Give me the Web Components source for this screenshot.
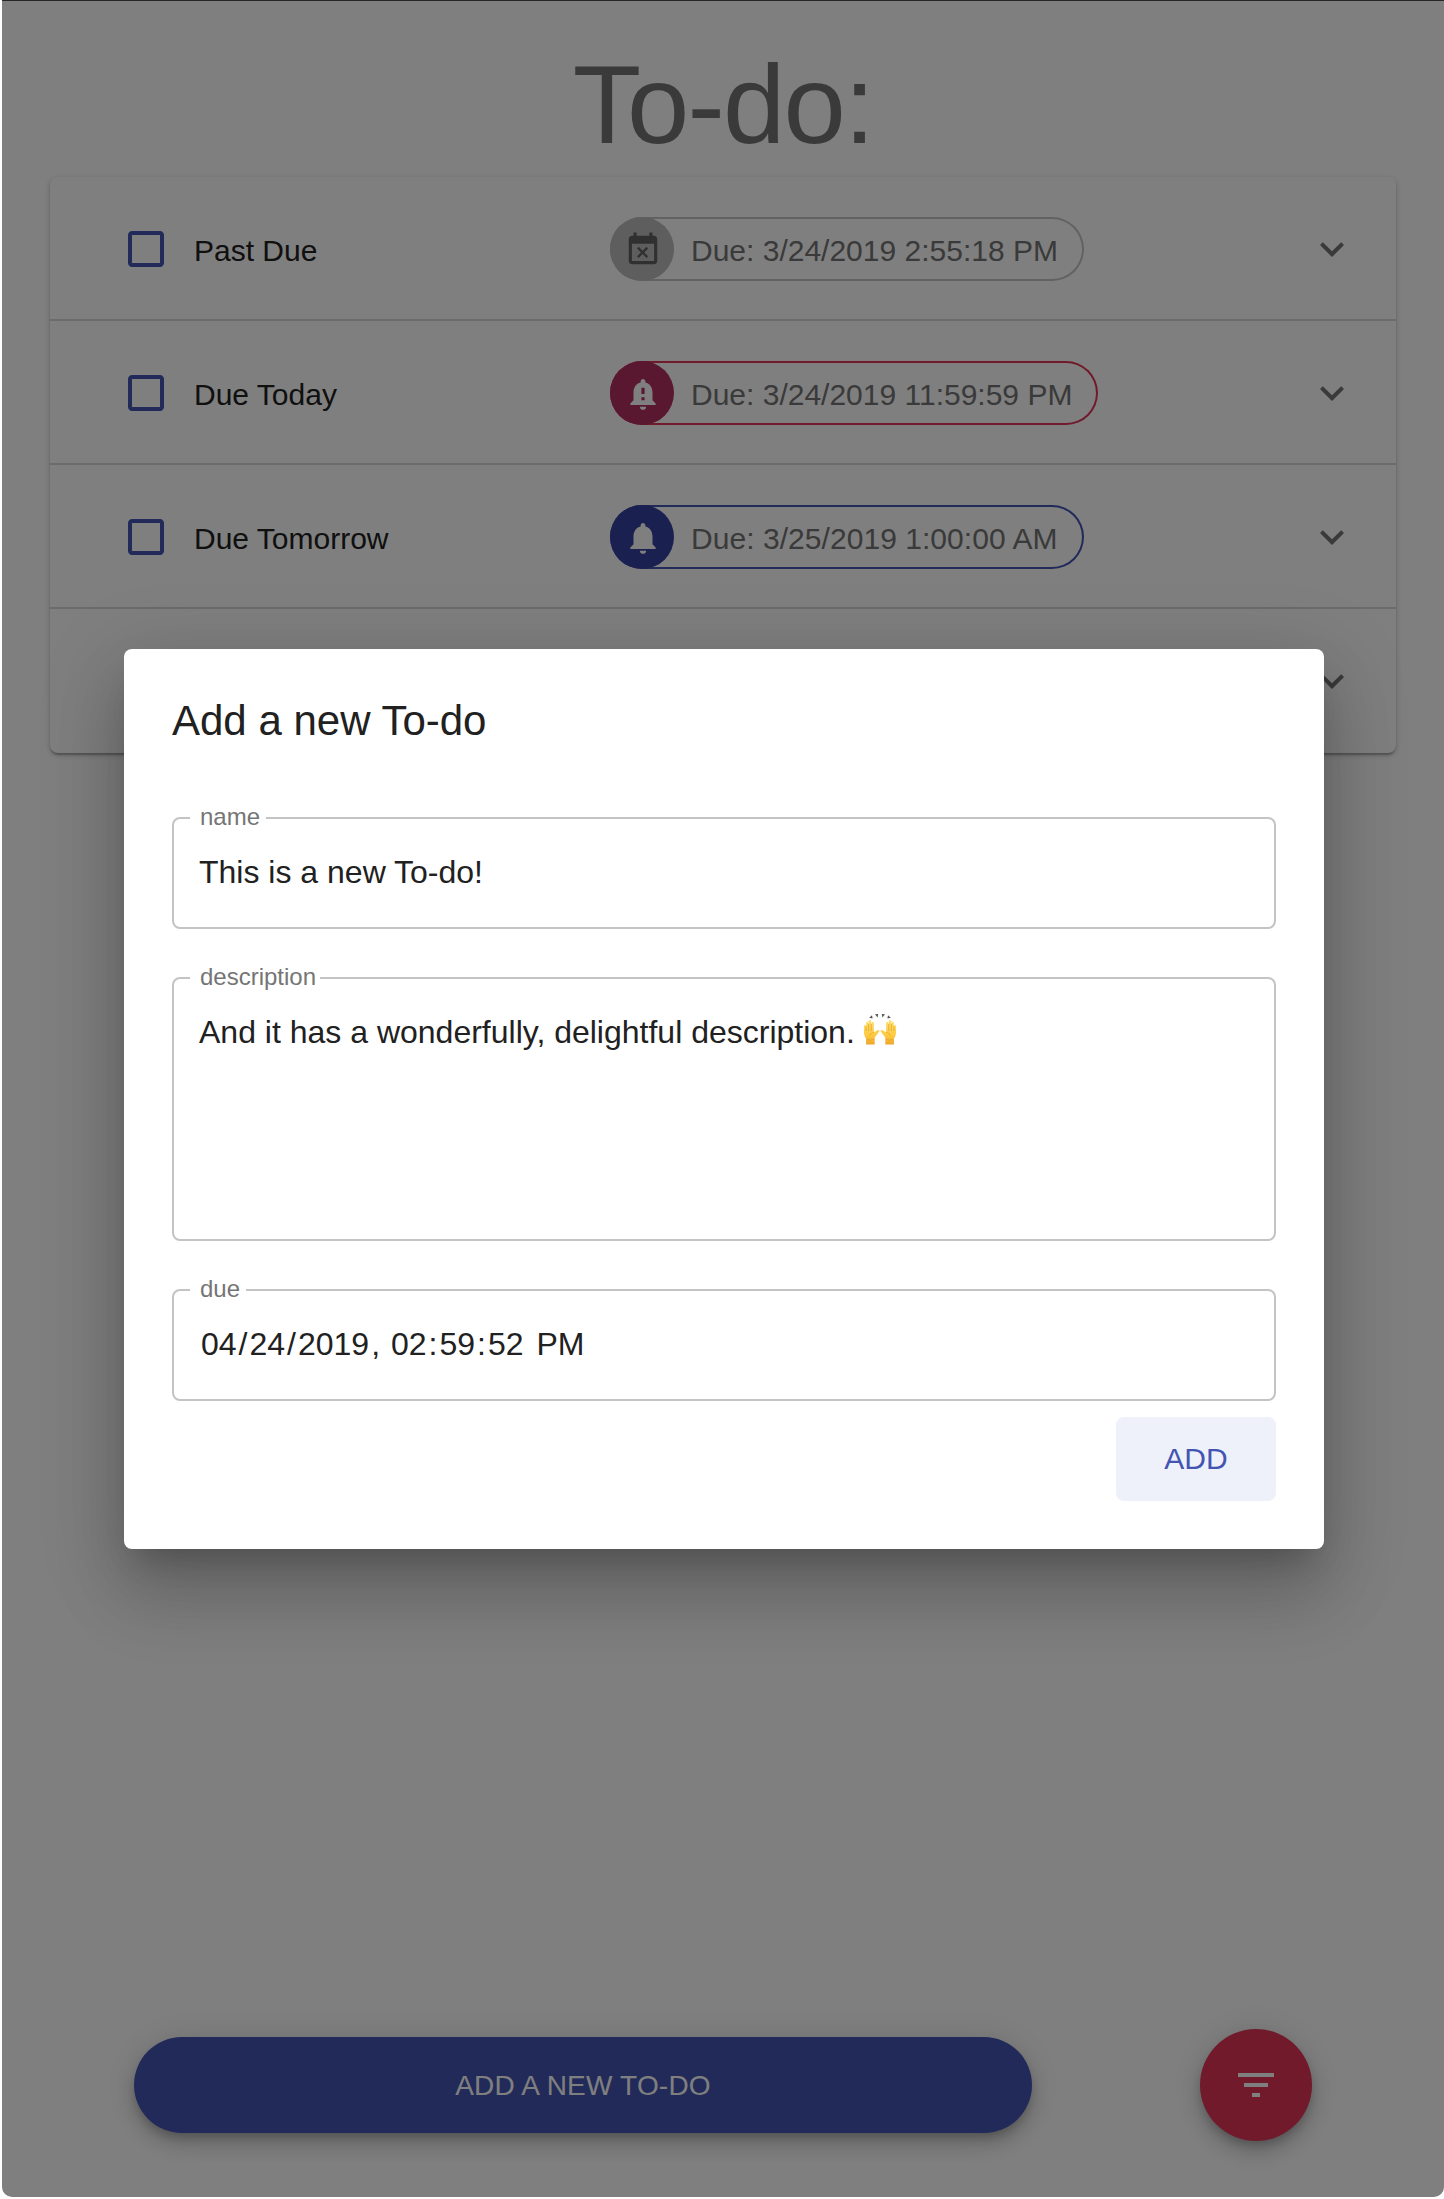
<!DOCTYPE html>
<html lang="en">
<head>
<meta charset="utf-8">
<title>To-do</title>
<style>
  html, body { margin: 0; background: #fff; }
  body { font-family: "Liberation Sans", Arial, sans-serif; width: 1444px; height: 2199px; overflow: hidden; }
</style>
</head>
<body>
<todo-app>
  <todo-item name="Past Due" due="3/24/2019 2:55:18 PM" tone="past"></todo-item>
  <todo-item name="Due Today" due="3/24/2019 11:59:59 PM" tone="today"></todo-item>
  <todo-item name="Due Tomorrow" due="3/25/2019 1:00:00 AM" tone="soon"></todo-item>
  <todo-item></todo-item>
  <todo-dialog slot="dialog"></todo-dialog>
</todo-app>
<script>
const ICONS = {
  box: 'M19 5v14H5V5h14m0-2H5c-1.1 0-2 .9-2 2v14c0 1.1.9 2 2 2h14c1.1 0 2-.9 2-2V5c0-1.1-.9-2-2-2z',
  more: 'M16.59 8.59L12 13.17 7.41 8.59 6 10l6 6 6-6z',
  filter: 'M10 18h4v-2h-4v2zM3 6v2h18V6H3zm3 7h12v-2H6v2z',
  past: 'M9.31 17l2.44-2.44L14.19 17l1.06-1.06-2.44-2.44 2.44-2.44L14.19 10l-2.44 2.44L9.31 10l-1.06 1.06 2.44 2.44-2.44 2.44L9.31 17zM19 3h-1V1h-2v2H8V1H6v2H5c-1.11 0-1.99.9-1.99 2L3 19c0 1.1.89 2 2 2h14c1.1 0 2-.9 2-2V5c0-1.1-.9-2-2-2zm0 16H5V8h14v11z',
  today: 'M18 16v-5c0-3.07-1.64-5.64-4.5-6.32V4c0-.83-.67-1.5-1.5-1.5s-1.5.67-1.5 1.5v.68C7.63 5.36 6 7.92 6 11v5l-2 2v1h16v-1l-2-2zm-5 0h-2v-2h2v2zm0-4h-2V8h2v4zm-1 10c1.1 0 2-.9 2-2h-4c0 1.1.89 2 2 2z',
  soon: 'M12 22c1.1 0 2-.9 2-2h-4c0 1.1.89 2 2 2zm6-6v-5c0-3.07-1.64-5.64-4.5-6.32V4c0-.83-.67-1.5-1.5-1.5s-1.5.67-1.5 1.5v.68C7.63 5.36 6 7.92 6 11v5l-2 2v1h16v-1l-2-2z'
};

class Base extends HTMLElement {
  connectedCallback() {
    if (this.shadowRoot) return;
    this.attachShadow({ mode: 'open' }).innerHTML = this.view();
  }
}

customElements.define('md-icon', class extends Base {
  view() {
    return `<style>:host{display:block;flex:none;width:48px;height:48px}svg{display:block;width:100%;height:100%;fill:currentColor}</style>
    <svg viewBox="0 0 24 24"><path d="${ICONS[this.getAttribute('name')]}"/></svg>`;
  }
});

customElements.define('due-chip', class extends Base {
  view() {
    return `<style>
      :host{display:flex;box-sizing:border-box;width:474px;height:64px;border-radius:32px;box-shadow:inset 0 0 0 2px var(--line);color:#757575;--line:#c4c4c4;--disc:#bdbdbd;--glyph:#616161}
      :host([tone=today]){width:488px;--line:#e23458;--disc:#b42e60;--glyph:#fff}
      :host([tone=soon]){--line:#4354b2;--disc:#3440a0;--glyph:#fff}
      .disc{display:flex;justify-content:center;align-items:center;width:64px;height:64px;border-radius:50%;background:var(--disc);color:var(--glyph);flex:none;padding:1.5px 0 0 2px;box-sizing:border-box}
      md-icon{width:38px;height:38px}
      .t{padding:4px 0 0 17px;line-height:60px;font-size:30px;white-space:nowrap}
      :host([tone=soon]) .t{letter-spacing:.05px}
    </style><div class="disc"><md-icon name="${this.getAttribute('tone')}"></md-icon></div><div class="t"><slot></slot></div>`;
  }
});

customElements.define('todo-item', class extends Base {
  view() {
    const n = this.getAttribute('name');
    const tone = this.getAttribute('tone');
    return `<style>
      :host{display:grid;grid-template-columns:488px 1fr 48px;align-items:center;box-sizing:border-box;height:144px;padding:0 40px 0 72px;color:#212121;position:relative}
      :host(:not(:last-of-type)){box-shadow:inset 0 -2px #d6d6d6}
      .name{display:flex;align-items:center;gap:24px}
      .name span{font-size:30px;line-height:44px;padding-top:4px}
      md-icon[name=box]{color:#4354b2}
      md-icon[name=more]{color:#757575;grid-column:3}
    </style>
    ${n ? `<div class="name"><md-icon name="box"></md-icon><span>${n}</span></div>
    <due-chip tone="${tone}">Due: ${this.getAttribute('due')}</due-chip>` : ''}
    <md-icon name="more"></md-icon>`;
  }
});

customElements.define('outlined-field', class extends Base {
  view() {
    return `<style>
      :host{display:block;margin-top:38px}
      fieldset{box-sizing:border-box;margin:0;padding:0;border:2px solid #c4c4c4;border-radius:8px;height:var(--h,122px);min-width:0}
      legend{box-sizing:border-box;margin-left:16px;width:${this.getAttribute('notch')}px;padding:0 0 2px 10px;font-size:24px;line-height:20px;color:#757575;white-space:nowrap}
      .v{padding:24px 0 0 25px;font-size:32px;line-height:38px;color:#212121;white-space:nowrap}
    </style><fieldset><legend>${this.getAttribute('label')}</legend><div class="v"><slot></slot></div></fieldset>`;
  }
});

customElements.define('raised-hands', class extends Base {
  view() {
    return `<style>:host{display:inline-block;width:34px;height:32px;vertical-align:-2px;margin-left:-1px}svg{display:block}</style>
    <svg width="34" height="32" viewBox="0 0 34 32" role="img" aria-label="raised hands">
      <defs><linearGradient id="g" x1="0" y1="0" x2="0" y2="1"><stop offset="0" stop-color="#ffe070"/><stop offset=".65" stop-color="#fcc93f"/><stop offset="1" stop-color="#eea62c"/></linearGradient>
      <g id="h"><path fill="url(#g)" d="M3 31.400V25.600C1.600 23.500.7 20.500.9 17.200L1.200 12.500Q1.800 11.200 2.800 12.200L3 13.500 3.300 9.200Q4.200 7.800 5.300 9L5.500 11 5.900 7.700Q6.900 6.500 8 7.700L8.300 11 8.900 9.300Q10 8.200 10.900 9.600L10.900 18.300Q11.100 19.600 12.300 18.600 14.500 16.600 16.200 17.200 16.900 17.900 15.700 19.200L11.700 24.500V31.400Z"/>
      <path fill="none" stroke="#e3a02e" stroke-width=".7" d="M3.100 13.500V18M5.600 11V18M8.300 11V18M6.500 22.500Q8.500 19.500 10.500 19.500M4.200 26.500Q7.500 28 11.300 26"/></g></defs>
      <use href="#h"/><use href="#h" transform="matrix(-1 0 0 1 34 0)"/>
      <path fill="#555" d="M6.200 4.800L9 2.200 9.600 5.400ZM12 1.300L15.200.9 14.600 4.500ZM22 1.300L18.800.9 19.400 4.500ZM27.800 4.800L25 2.200 24.400 5.400Z"/>
    </svg>`;
  }
});

customElements.define('todo-dialog', class extends Base {
  view() {
    return `<style>
      :host{display:block;box-sizing:border-box;width:1200px;height:900px;padding:0 48px;background:#fff;border-radius:8px;box-shadow:0 22px 30px -14px rgba(0,0,0,.2),0 48px 70px 4px rgba(0,0,0,.14),0 18px 80px 14px rgba(0,0,0,.12)}
      h2{box-sizing:border-box;height:158px;margin:0;padding-top:44px;font-size:42px;line-height:56px;font-weight:400;color:#212121}
      outlined-field:first-of-type{margin-top:0}
      .tall{--h:274px}
      .d{padding:0 2px}
      .actions{display:flex;justify-content:flex-end;margin-top:16px}
      button{box-sizing:border-box;width:160px;height:84px;border:0;border-radius:8px;background:#eef1fa;color:#4354b2;font:30px/80px "Liberation Sans",Arial,sans-serif;padding:0 0 1px}
    </style>
    <h2>Add a new To-do</h2>
    <outlined-field label="name" notch="76">This is a new To-do!</outlined-field>
    <outlined-field label="description" notch="130" class="tall">And it has a wonderfully, delightful description. <raised-hands></raised-hands></outlined-field>
    <outlined-field label="due" notch="56"><span class="d">04</span>/<span class="d">24</span>/<span class="d">2019</span>, <span class="d">02</span>:<span class="d">59</span>:<span class="d">52</span> <span class="d">PM</span></outlined-field>
    <div class="actions"><button>ADD</button></div>`;
  }
});

customElements.define('todo-app', class extends Base {
  view() {
    return `<style>
      :host{display:flex;flex-direction:column;box-sizing:border-box;position:relative;margin-left:2px;width:1442px;height:2197px;border-top:1px solid #2a2628;border-radius:0 0 10px 10px;overflow:hidden;background:#fff}
      h1{box-sizing:border-box;height:176px;margin:0;padding:31px 0 0;text-align:center;font-size:112px;line-height:146px;font-weight:400;letter-spacing:-.016em;color:#757575}
      .card{margin:0 48px;width:1346px;height:576px;border-radius:8px;box-shadow:0 2px 6px rgba(0,0,0,.2),0 2px 2px rgba(0,0,0,.14),0 4px 2px -2px rgba(0,0,0,.12)}
      .bar{display:flex;align-items:center;gap:168px;margin:auto 0 56px 132px}
      button{border:0;padding:0;color:#fff;box-shadow:0 6px 10px -2px rgba(0,0,0,.2),0 12px 20px rgba(0,0,0,.14),0 2px 36px rgba(0,0,0,.12)}
      .new{box-sizing:border-box;width:898px;height:96px;border-radius:48px;padding-top:2px;background:#4354b2;font:28px/92px "Liberation Sans",Arial,sans-serif;letter-spacing:.2px}
      .fab{display:flex;align-items:center;justify-content:center;width:112px;height:112px;border-radius:50%;background:#e03458}
      .shade{position:absolute;inset:0;display:flex;align-items:center;justify-content:center;padding-left:2px;background:rgba(0,0,0,.5)}
    </style>
    <h1>To-do:</h1>
    <div class="card"><slot></slot></div>
    <div class="bar"><button class="new">ADD A NEW TO-DO</button><button class="fab"><md-icon name="filter"></md-icon></button></div>
    <div class="shade"><slot name="dialog"></slot></div>`;
  }
});
</script>
</body>
</html>
